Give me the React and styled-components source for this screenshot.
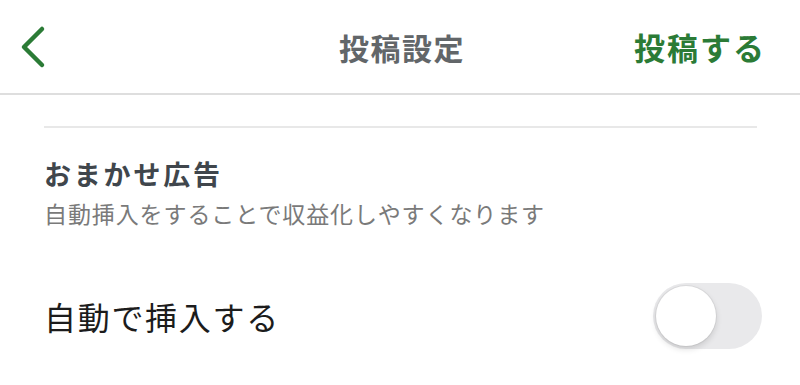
import React, { useState } from 'react';
import styled, { createGlobalStyle } from 'styled-components';

const GlobalStyle = createGlobalStyle`
  body {
    margin: 0;
    background: #ffffff;
    font-family: 'Noto Sans CJK JP', 'Noto Sans', sans-serif;
  }
`;

const Page = styled.div`
  width: 800px;
  height: 385px;
  background: #ffffff;
  overflow: hidden;
`;

const Header = styled.header`
  height: 93px;
  display: grid;
  grid-template-columns: 1fr auto 1fr;
  align-items: center;
  border-bottom: 2px solid #dedede;
  padding: 0 34px 0 18px;
`;

const BackButton = styled.button`
  justify-self: start;
  background: none;
  border: none;
  padding: 0;
  display: flex;
  align-items: center;
  cursor: pointer;
`;

const Title = styled.h1`
  margin: 0 0 0 20px;
  font-size: 30px;
  font-weight: 700;
  letter-spacing: 1.5px;
  color: #626669;
  line-height: 1;
`;

const Action = styled.button`
  justify-self: end;
  background: none;
  border: none;
  padding: 0;
  font-family: inherit;
  font-size: 31px;
  font-weight: 700;
  letter-spacing: 2px;
  color: #2b7b36;
  line-height: 1;
  cursor: pointer;
`;

const Content = styled.main`
  padding: 0 38px 0 44px;
`;

const Divider = styled.hr`
  margin: 31px 5px 0 0;
  border: none;
  border-top: 2px solid #e8e8e8;
`;

const SectionTitle = styled.h2`
  margin: 26px 0 0;
  font-size: 27px;
  font-weight: 700;
  letter-spacing: 2.8px;
  line-height: 40px;
  color: #40464c;
`;

const SectionNote = styled.p`
  margin: 4px 0 0;
  font-size: 23px;
  letter-spacing: 0.9px;
  line-height: 30px;
  color: #7a7a7a;
`;

const Row = styled.div`
  margin-top: 55px;
  display: flex;
  align-items: center;
  justify-content: space-between;
`;

const RowLabel = styled.span`
  font-size: 32px;
  letter-spacing: 1.7px;
  color: #1c1c1c;
`;

const Switch = styled.button`
  position: relative;
  width: 109px;
  height: 66px;
  border: none;
  padding: 0;
  border-radius: 33px;
  background: ${(p) => (p.$on ? '#2b7b36' : '#e9e9eb')};
  cursor: pointer;
  transition: background 0.2s;
`;

const Knob = styled.span`
  position: absolute;
  top: 3px;
  left: ${(p) => (p.$on ? '47px' : '3px')};
  width: 60px;
  height: 60px;
  border-radius: 50%;
  background: #ffffff;
  box-shadow: 0 3px 6px rgba(0, 0, 0, 0.14), 0 0 0 1px rgba(0, 0, 0, 0.05);
  transition: left 0.2s;
`;

const App = () => {
  const [auto, setAuto] = useState(false);

  return (
    <Page>
      <GlobalStyle />
      <Header>
        <BackButton aria-label="戻る">
          <svg width="32" height="46" viewBox="0 0 32 46">
            <polyline
              points="24,5 6,23 24,41"
              fill="none"
              stroke="#2b7b36"
              strokeWidth="4.5"
              strokeLinecap="round"
              strokeLinejoin="round"
            />
          </svg>
        </BackButton>
        <Title>投稿設定</Title>
        <Action>投稿する</Action>
      </Header>
      <Content>
        <Divider />
        <SectionTitle>おまかせ広告</SectionTitle>
        <SectionNote>自動挿入をすることで収益化しやすくなります</SectionNote>
        <Row>
          <RowLabel>自動で挿入する</RowLabel>
          <Switch $on={auto} onClick={() => setAuto(!auto)} aria-label="自動で挿入する">
            <Knob $on={auto} />
          </Switch>
        </Row>
      </Content>
    </Page>
  );
};

export default App;
